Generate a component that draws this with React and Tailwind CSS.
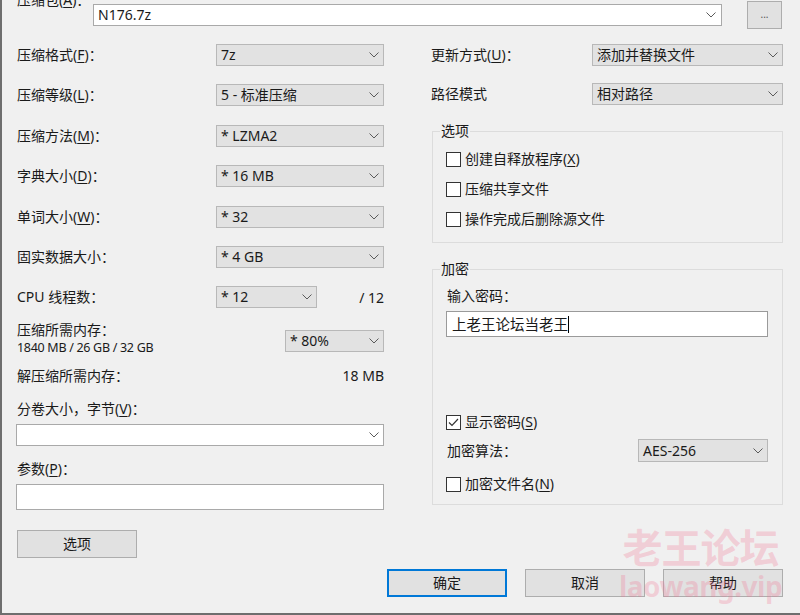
import React from 'react';

// --- helpers ---
const Chevron = () => (
    <svg width="10" height="6" viewBox="0 0 10 6" className="shrink-0">
        <path d="M0.5 0.5 L5 5 L9.5 0.5" stroke="#5a5a5a" strokeWidth="1" fill="none" />
    </svg>
);

const Select = ({ value, className = '', white = false }) => (
    <div className={`flex items-center h-[22px] border pl-[4px] pr-[4px] ${white ? 'bg-white border-[#a9a9a9]' : 'bg-[#e2e2e2] border-[#b8b8b8]'} ${className}`}>
        <span className="flex-1 text-[14px] leading-none whitespace-nowrap">{value}</span>
        <Chevron />
    </div>
);

const Label = ({ text, k, colon = true, className = '' }) => (
    <span className={`text-[14px] leading-[18px] whitespace-nowrap ${className}`}>
        {text}
        {k && <>(<u className="underline-offset-2">{k}</u>)</>}
        {colon && '：'}
    </span>
);

const Check = ({ checked = false }) => (
    <div className="w-[15px] h-[15px] border border-[#333] bg-white flex items-center justify-center shrink-0">
        {checked && (
            <svg width="11" height="9" viewBox="0 0 11 9">
                <path d="M1 4.5 L4 7.5 L10 1" stroke="#333" strokeWidth="1.2" fill="none" />
            </svg>
        )}
    </div>
);

const CheckRow = ({ text, k, checked, className = '' }) => (
    <div className={`flex items-center h-[18px] gap-[4px] ${className}`}>
        <Check checked={checked} />
        <Label text={text} k={k} colon={false} />
    </div>
);

const Button = ({ children, className = '', primary = false }) => (
    <div className={`w-[120px] h-[28px] flex items-center justify-center text-[14px] bg-[#e1e1e1] ${primary ? 'border-2 border-[#0078d7]' : 'border border-[#adadad]'} ${className}`}>
        {children}
    </div>
);

const Row = ({ label, k, value, colon = true }) => (
    <div className="flex items-center h-[22px]">
        <Label text={label} k={k} colon={colon} className="flex-1 pl-[1px]" />
        <Select value={value} className="w-[168px]" />
    </div>
);

export default function App() {
    return (
        <div className="relative w-[800px] h-[615px] overflow-hidden bg-[#f0f0f0] text-[#1a1a1a] font-['Noto_Sans','Noto_Sans_CJK_SC',sans-serif] shadow-[inset_2px_-2px_0_0_#6e6e6e]">
            {/* 顶部：压缩包 */}
            <div className="flex h-[44px] pl-[17px]">
                <Label text="压缩包" k="A" className="w-[76px] -mt-[9px]" />
                <Select value="N176.7z" white className="w-[629px] mt-[4px] pl-[4px] pr-[5px]" />
                <div className="ml-[25px] mt-[1px] w-[35px] h-[28px] flex items-center justify-center bg-[#e1e1e1] border border-[#adadad] text-[10px] leading-none pb-[2px] text-[#555]">...</div>
            </div>

            <div className="flex items-start pl-[16px] gap-[47px]">
                {/* 左列 */}
                <div className="w-[368px] flex flex-col">
                    <div className="flex flex-col gap-[18.4px]">
                        <Row label="压缩格式" k="F" value="7z" />
                        <Row label="压缩等级" k="L" value="5 - 标准压缩" />
                        <Row label="压缩方法" k="M" value="*  LZMA2" />
                        <Row label="字典大小" k="D" value="*  16 MB" />
                        <Row label="单词大小" k="W" value="*  32" />
                        <Row label="固实数据大小" value="*  4 GB" />
                        <div className="flex items-center h-[22px]">
                            <Label text="CPU 线程数" className="w-[200px] pl-[1px]" />
                            <Select value="*  12" className="w-[101px]" />
                            <span className="ml-auto text-[14px]">/ 12</span>
                        </div>
                    </div>

                    <div className="flex mt-[12.6px]">
                        <div className="flex-1 flex flex-col pl-[1px]">
                            <Label text="压缩所需内存" />
                            <span className="text-[12.5px] leading-[18px] tracking-[-0.3px]">1840 MB / 26 GB / 32 GB</span>
                        </div>
                        <Select value="*  80%" className="w-[99px] mt-[9px]" />
                    </div>

                    <div className="flex justify-between mt-[10px] pl-[1px]">
                        <Label text="解压缩所需内存" />
                        <span className="text-[14px] leading-[18px]">18 MB</span>
                    </div>

                    <Label text="分卷大小，字节" k="V" className="mt-[15px] pl-[1px]" />
                    <Select value="" white className="mt-[6px]" />

                    <Label text="参数" k="P" className="mt-[14px] pl-[1px]" />
                    <div className="mt-[6px] h-[26px] bg-white border border-[#a9a9a9]" />

                    <Button className="mt-[20px] ml-[1px]">选项</Button>
                </div>

                {/* 右列 */}
                <div className="w-[352px] flex flex-col">
                    <div className="flex items-center h-[22px]">
                        <Label text="更新方式" k="U" className="flex-1" />
                        <Select value="添加并替换文件" className="w-[191px]" />
                    </div>
                    <div className="flex items-center h-[22px] mt-[17px]">
                        <Label text="路径模式" colon={false} className="flex-1" />
                        <Select value="相对路径" className="w-[191px]" />
                    </div>

                    <fieldset className="mt-[17px] ml-[1px] border border-[#dcdcdc]">
                        <legend className="ml-[7px] px-[1px] text-[14px] leading-[18px]">选项</legend>
                        <div className="flex flex-col gap-[12px] pl-[13px] pt-[10px] pb-[14px]">
                            <CheckRow text="创建自释放程序" k="X" />
                            <CheckRow text="压缩共享文件" />
                            <CheckRow text="操作完成后删除源文件" />
                        </div>
                    </fieldset>

                    <fieldset className="mt-[17px] ml-[1px] border border-[#dcdcdc]">
                        <legend className="ml-[7px] px-[1px] text-[14px] leading-[18px]">加密</legend>
                        <div className="flex flex-col pl-[13px] pr-[14px] pt-[9px] pb-[11px]">
                            <Label text="输入密码" className="pl-[1px]" />
                            <div className="mt-[6px] h-[26px] bg-white border border-[#9a9a9a] flex items-center pl-[5px]">
                                <span className="text-[14.5px] leading-none">上老王论坛当老王</span>
                                <span className="w-[1px] h-[17px] bg-black" />
                            </div>
                            <CheckRow text="显示密码" k="S" checked className="mt-[76px]" />
                            <div className="flex items-center h-[23px] mt-[8px]">
                                <Label text="加密算法" className="flex-1 pl-[1px]" />
                                <Select value="AES-256" className="w-[130px] h-[23px]" />
                            </div>
                            <CheckRow text="加密文件名" k="N" className="mt-[13px]" />
                        </div>
                    </fieldset>
                </div>
            </div>

            {/* 底部按钮 */}
            <div className="flex justify-end gap-[18px] pr-[17px] mt-[11px]">
                <Button primary>确定</Button>
                <Button>取消</Button>
                <Button>帮助</Button>
            </div>

            {/* 水印 */}
            <div className="absolute left-[619px] top-[528px] pointer-events-none flex flex-col items-center text-[rgba(240,120,150,0.28)] font-bold">
                <span className="text-[40px] leading-none tracking-[-1px]">老王论坛</span>
                <span className="text-[28px] leading-none mt-[4px] tracking-[-0.5px]">laowang.vip</span>
            </div>
        </div>
    );
}
